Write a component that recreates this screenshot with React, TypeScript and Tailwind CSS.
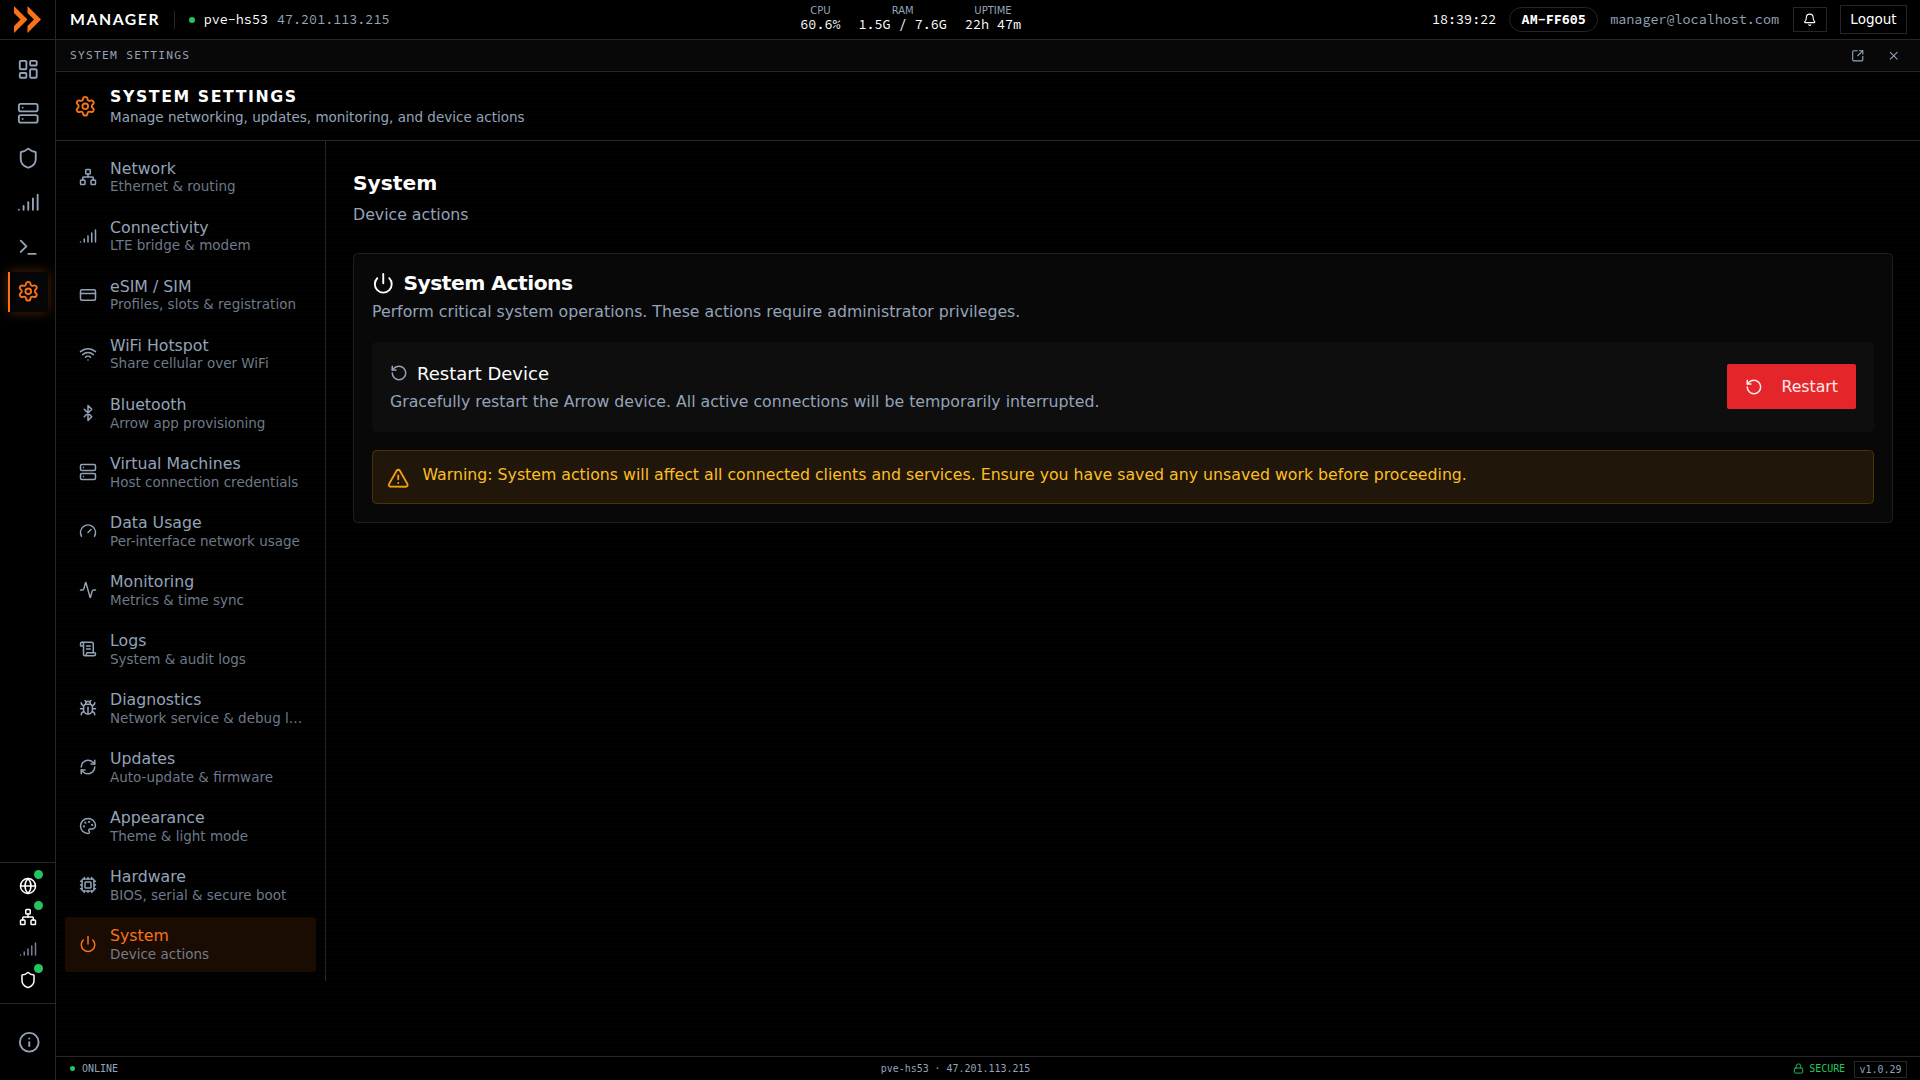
import {
  Activity, Bell, Bluetooth, Bug, Cpu, CreditCard, Gauge, Globe, Info, LayoutDashboard, Lock, Network, Palette,
  Power, RefreshCw, RotateCcw, ScrollText, Server, Settings, Shield, Signal, SquareArrowOutUpRight, Terminal,
  TriangleAlert, Wifi, X, type LucideIcon,
} from 'lucide-react'

const railItems: { icon: LucideIcon; active?: boolean }[] = [
  { icon: LayoutDashboard },
  { icon: Server },
  { icon: Shield },
  { icon: Signal },
  { icon: Terminal },
  { icon: Settings, active: true },
]

const railStatus: { icon: LucideIcon; up: boolean }[] = [
  { icon: Globe, up: true },
  { icon: Network, up: true },
  { icon: Signal, up: false },
  { icon: Shield, up: true },
]

const sections: { icon: LucideIcon; label: string; description: string }[] = [
  { icon: Network, label: 'Network', description: 'Ethernet & routing' },
  { icon: Signal, label: 'Connectivity', description: 'LTE bridge & modem' },
  { icon: CreditCard, label: 'eSIM / SIM', description: 'Profiles, slots & registration' },
  { icon: Wifi, label: 'WiFi Hotspot', description: 'Share cellular over WiFi' },
  { icon: Bluetooth, label: 'Bluetooth', description: 'Arrow app provisioning' },
  { icon: Server, label: 'Virtual Machines', description: 'Host connection credentials' },
  { icon: Gauge, label: 'Data Usage', description: 'Per-interface network usage' },
  { icon: Activity, label: 'Monitoring', description: 'Metrics & time sync' },
  { icon: ScrollText, label: 'Logs', description: 'System & audit logs' },
  { icon: Bug, label: 'Diagnostics', description: 'Network service & debug logs' },
  { icon: RefreshCw, label: 'Updates', description: 'Auto-update & firmware' },
  { icon: Palette, label: 'Appearance', description: 'Theme & light mode' },
  { icon: Cpu, label: 'Hardware', description: 'BIOS, serial & secure boot' },
  { icon: Power, label: 'System', description: 'Device actions' },
]

const stats = [
  { label: 'CPU', value: '60.6%' },
  { label: 'RAM', value: '1.5G / 7.6G' },
  { label: 'UPTIME', value: '22h 47m' },
]

function Rail() {
  return (
    <aside className="flex w-14 shrink-0 flex-col border-r border-[#262626] bg-black">
      <div className="flex h-10 shrink-0 items-center justify-center border-b border-[#262626]">
        <svg viewBox="0 0 27 27" className="h-[27px] w-[27px] fill-[#f97316]">
          <path d="M0 0 L13.5 13.5 L0 27 V20 L6.5 13.5 L0 7 Z" />
          <path d="M13.5 0 L27 13.5 L13.5 27 V20 L20 13.5 L13.5 7 Z" />
        </svg>
      </div>
      <nav className="flex flex-col items-center gap-[4.5px] pt-[9px]">
        {railItems.map(({ icon: Icon, active }, i) => (
          <a
            key={i}
            className={
              active
                ? 'flex h-10 w-10 items-center justify-center border-l-2 border-[#f97316] bg-[#050505] text-[#f97316] shadow-[0_0_12px_rgba(249,115,22,0.3)]'
                : 'flex h-10 w-10 items-center justify-center border-l-2 border-transparent text-[#94a3b8]'
            }
          >
            <Icon className="h-[22.5px] w-[22.5px]" />
          </a>
        ))}
      </nav>
      <div className="mt-auto flex flex-col items-center gap-[4.5px] border-t border-[#262626] pt-[9.25px] pb-[9.75px]">
        {railStatus.map(({ icon: Icon, up }, i) => (
          <div key={i} className="relative flex h-[27px] w-[27px] items-center justify-center">
            <Icon className={up ? 'mt-px h-[18px] w-[18px] text-white' : 'mt-px h-[18px] w-[18px] text-[#94a3b8]/80'} />
            {up && <span className="absolute -top-0.5 -right-[1.5px] h-[9px] w-[9px] rounded-full bg-[#22c55e]" />}
          </div>
        ))}
      </div>
      <div className="flex h-[77px] items-center justify-center border-t border-[#262626] pl-[3px]">
        <Info className="h-[22.5px] w-[22.5px] text-[#94a3b8]" />
      </div>
    </aside>
  )
}

function TopBar() {
  return (
    <header className="flex h-10 shrink-0 items-center justify-between border-b border-[#262626] bg-black pr-[13px] pl-3.5 font-['Source_Code_Pro',monospace] text-[13.4px]">
      <div className="flex items-center">
        <span className="pb-0.5 font-['Lato',sans-serif] text-[15.75px] font-bold tracking-[0.1em]">MANAGER</span>
        <span className="ml-3.5 h-[18px] w-px bg-[#262626]" />
        <span className="ml-[13.5px] h-1.5 w-1.5 rounded-full bg-[#22c55e]" />
        <span className="ml-[9px] pt-px">pve-hs53</span>
        <span className="ml-[9px] pt-px text-[#94a3b8]">47.201.113.215</span>
      </div>
      <div className="flex items-center gap-[18px] pb-0.5">
        {stats.map(stat => (
          <div key={stat.label} className="flex flex-col items-center">
            <span className="font-['DejaVu_Sans',sans-serif] text-[10px] leading-[13px] text-[#94a3b8]">
              {stat.label}
            </span>
            <span className="leading-4">{stat.value}</span>
          </div>
        ))}
      </div>
      <div className="flex items-center gap-[13px]">
        <span className="pt-px">18:39:22</span>
        <span className="flex h-[25px] w-[89px] items-center justify-center rounded-full border border-[#262626] pt-px font-bold">
          AM-FF605
        </span>
        <span className="mr-px -ml-px pt-px text-[#94a3b8]">manager@localhost.com</span>
        <button className="flex h-[25px] w-[34px] items-center justify-center border border-[#262626]">
          <Bell className="h-[13.5px] w-[13.5px]" />
        </button>
        <button className="h-[29px] w-[67px] border border-[#262626] font-['DejaVu_Sans',sans-serif] text-[13.5px]">
          Logout
        </button>
      </div>
    </header>
  )
}

function SettingsNav() {
  return (
    <nav className="flex w-[270px] shrink-0 flex-col gap-[4.5px] self-start border-r border-[#262626] p-[9px]">
      {sections.map(({ icon: Icon, label, description }) => {
        const active = label === 'System'
        return (
          <a
            key={label}
            className={
              active
                ? 'flex h-[54.53px] items-center gap-[13.5px] rounded-[3px] bg-[#1a0c02] px-[13.5px] text-[#f97316]'
                : 'flex h-[54.53px] items-center gap-[13.5px] rounded-[3px] px-[13.5px] text-[#94a3b8]'
            }
          >
            <Icon className="h-[18px] w-[18px] shrink-0" />
            <div className="min-w-0 pb-[0.65px]">
              <div className="text-[15.75px] leading-[19.5px]">{label}</div>
              <div className="truncate text-[13.5px] leading-[16.5px] text-[#94a3b8]/75">{description}</div>
            </div>
          </a>
        )
      })}
    </nav>
  )
}

function SystemPanel() {
  return (
    <main className="flex-1 p-[27px]">
      <h2 className="text-[20.25px] leading-[31px] font-bold">System</h2>
      <p className="mt-[5px] text-[15.75px] leading-[22.5px] text-[#94a3b8]">Device actions</p>
      <section className="mt-[26px] rounded-[4.5px] border border-[#1f1f1f] bg-[#080808] p-[18px]">
        <div className="flex items-center gap-[9px]">
          <Power className="h-[22.5px] w-[22.5px]" />
          <h3 className="text-[20.25px] leading-[22.5px] font-bold tracking-tight">System Actions</h3>
        </div>
        <p className="mt-[7px] text-[15.75px] leading-[22.5px] text-[#94a3b8]">
          Perform critical system operations. These actions require administrator privileges.
        </p>
        <div className="mt-[18px] flex h-[90px] items-center justify-between rounded-[4.5px] bg-[#0e0e0e] px-[18px]">
          <div>
            <div className="flex items-center gap-[9px]">
              <RotateCcw className="h-[18px] w-[18px] text-[#94a3b8]" />
              <h4 className="text-[18px] leading-[27px]">Restart Device</h4>
            </div>
            <p className="mt-[4.5px] text-[15.75px] leading-[22.5px] text-[#94a3b8]">
              Gracefully restart the Arrow device. All active connections will be temporarily interrupted.
            </p>
          </div>
          <button className="flex h-[45px] w-[129px] items-center gap-[18.5px] rounded-[2px] bg-[#e42529] px-[18px] text-[15.75px] text-white/90">
            <RotateCcw className="h-[18px] w-[18px]" />
            Restart
          </button>
        </div>
        <div className="mt-[18px] flex h-[54px] gap-[13.5px] rounded-[4.5px] border border-[#4d3208] bg-[#20160a] px-[13.5px] pt-[13px] text-[15.75px] leading-[22.5px] text-[#fbbf24]">
          <TriangleAlert className="mt-[3px] h-[22.5px] w-[22.5px] text-[#f59e0b]" />
          <p>
            Warning: System actions will affect all connected clients and services. Ensure you have saved any unsaved
            work before proceeding.
          </p>
        </div>
      </section>
    </main>
  )
}

function StatusBar() {
  return (
    <footer className="flex h-6 shrink-0 items-center justify-between border-t border-[#262626] bg-black pt-px pr-[13px] pl-3.5 font-['DejaVu_Sans_Mono',monospace] text-[9.95px] text-[#94a3b8]">
      <div className="flex items-center gap-[7px]">
        <span className="h-[5px] w-[5px] rounded-full bg-[#22c55e]" />
        ONLINE
      </div>
      <div>pve-hs53 · 47.201.113.215</div>
      <div className="flex items-center gap-[9px]">
        <span className="flex items-center gap-[5px] text-[#22c55e]">
          <Lock className="h-[11px] w-[11px]" />
          SECURE
        </span>
        <span className="border border-[#262626] px-[4.5px] leading-[15px]">v1.0.29</span>
      </div>
    </footer>
  )
}

export default function App() {
  return (
    <div className="flex h-screen w-screen overflow-hidden bg-black font-['DejaVu_Sans',sans-serif] text-white">
      <Rail />
      <div className="flex min-w-0 flex-1 flex-col">
        <TopBar />
        <div className="flex h-8 shrink-0 items-center justify-between border-b border-[#262626] bg-[#080808] pr-[13px] pl-3.5 text-[#94a3b8]">
          <span className="pt-0.5 font-['DejaVu_Sans_Mono',monospace] text-[11.25px] tracking-[1.25px]">
            SYSTEM SETTINGS
          </span>
          <div className="flex gap-[9px]">
            <button className="flex h-[27px] w-[27px] items-center justify-center">
              <SquareArrowOutUpRight className="h-[13.5px] w-[13.5px]" />
            </button>
            <button className="flex h-[27px] w-[27px] items-center justify-center">
              <X className="h-[13.5px] w-[13.5px]" />
            </button>
          </div>
        </div>
        <div className="flex min-h-0 flex-1 flex-col bg-[repeating-linear-gradient(to_bottom,#000_0_2px,#020202_2px_4px)]">
          <div className="flex h-[69px] shrink-0 items-center gap-[13.5px] border-b border-[#262626] px-[18px]">
            <Settings className="h-[22.5px] w-[22.5px] text-[#f97316]" />
            <div className="pt-0.5">
              <h1 className="text-[15.75px] leading-[20px] font-bold tracking-[0.1em]">SYSTEM SETTINGS</h1>
              <p className="text-[13.5px] leading-[21px] text-[#94a3b8]">
                Manage networking, updates, monitoring, and device actions
              </p>
            </div>
          </div>
          <div className="flex">
            <SettingsNav />
            <SystemPanel />
          </div>
        </div>
        <StatusBar />
      </div>
    </div>
  )
}
